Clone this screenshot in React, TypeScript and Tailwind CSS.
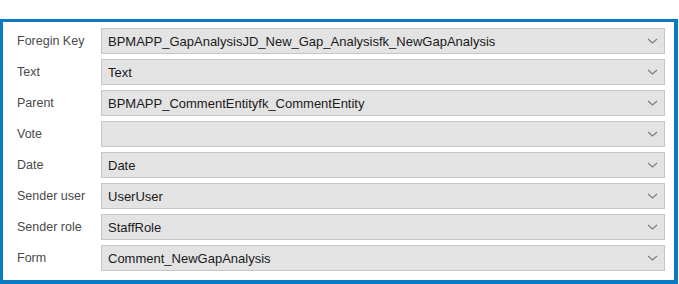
const fields = [
  { label: 'Foregin Key', value: 'BPMAPP_GapAnalysisJD_New_Gap_Analysisfk_NewGapAnalysis' },
  { label: 'Text', value: 'Text' },
  { label: 'Parent', value: 'BPMAPP_CommentEntityfk_CommentEntity' },
  { label: 'Vote', value: '' },
  { label: 'Date', value: 'Date' },
  { label: 'Sender user', value: 'UserUser' },
  { label: 'Sender role', value: 'StaffRole' },
  { label: 'Form', value: 'Comment_NewGapAnalysis' },
];

function Chevron() {
  return (
    <svg width="11" height="6" viewBox="0 0 11 6" className="shrink-0 mr-px">
      <path d="M1 1 L5.5 5 L10 1" fill="none" stroke="#7a7a7a" strokeWidth="1.1" />
    </svg>
  );
}

export default function App() {
  return (
    <div className="w-[679px] h-[284px] bg-white pt-[19px] pr-px" style={{ fontFamily: '"Liberation Sans", Arial, sans-serif' }}>
      <div className="h-[265px] border-[3px] border-r-4 border-b-4 border-[#0a7ac4] bg-white pl-[14px] pr-[9px] pt-[6px] flex flex-col gap-[5px]">
        {fields.map((f) => (
          <div key={f.label} className="flex items-center h-[26px]">
            <div className="w-[84px] text-[12.5px] text-[#4a4a4a] pt-px">{f.label}</div>
            <div className="flex-1 h-[26px] flex items-center justify-between bg-[#e4e3e4] border border-[#c6c6c6] pl-[6px] pr-[5px]">
              <span className="text-[13px] text-[#1a1a1a] pt-px">{f.value}</span>
              <Chevron />
            </div>
          </div>
        ))}
      </div>
    </div>
  );
}
